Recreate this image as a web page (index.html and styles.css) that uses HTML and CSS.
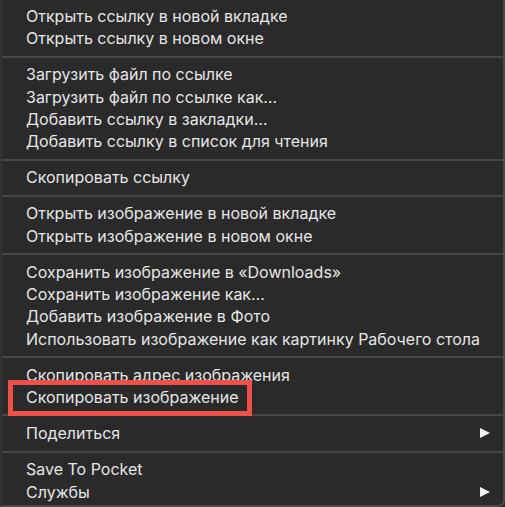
FILE: index.html
```html
<!DOCTYPE html>
<html lang="ru">
<head>
    <meta charset="UTF-8">
    <meta name="viewport" content="width=device-width, initial-scale=1.0">
    <title>Контекстное меню</title>
    <link rel="stylesheet" href="styles.css">
</head>
<body>
    <div class="menu">
        <ul class="group">
            <li class="item">Открыть ссылку в новой вкладке</li>
            <li class="item">Открыть ссылку в новом окне</li>
        </ul>
        <div class="sep"></div>
        <ul class="group">
            <li class="item">Загрузить файл по ссылке</li>
            <li class="item">Загрузить файл по ссылке как…</li>
            <li class="item">Добавить ссылку в закладки…</li>
            <li class="item">Добавить ссылку в список для чтения</li>
        </ul>
        <div class="sep"></div>
        <ul class="group">
            <li class="item">Скопировать ссылку</li>
        </ul>
        <div class="sep"></div>
        <ul class="group">
            <li class="item">Открыть изображение в новой вкладке</li>
            <li class="item">Открыть изображение в новом окне</li>
        </ul>
        <div class="sep"></div>
        <ul class="group">
            <li class="item">Сохранить изображение в «Downloads»</li>
            <li class="item">Сохранить изображение как…</li>
            <li class="item">Добавить изображение в Фото</li>
            <li class="item">Использовать изображение как картинку Рабочего стола</li>
        </ul>
        <div class="sep"></div>
        <ul class="group">
            <li class="item">Скопировать адрес изображения</li>
            <li class="item marked">Скопировать изображение</li>
        </ul>
        <div class="sep"></div>
        <ul class="group">
            <li class="item submenu">Поделиться</li>
        </ul>
        <div class="sep"></div>
        <ul class="group">
            <li class="item">Save To Pocket</li>
            <li class="item submenu">Службы</li>
        </ul>
    </div>
</body>
</html>
```

FILE: styles.css
```css
html, body {
    margin: 0;
    padding: 0;
    background-color: #2b2b2b;
}

.menu {
    width: 505px;
    height: 507px;
    box-sizing: border-box;
    padding-top: 5px;
    background-color: #2a2a2a;
    border-left: 2px solid #323232;
    border-right: 2px solid #4a4a4a;
    border-bottom: 2px solid #4a4a4a;
    border-bottom-right-radius: 7px;
    font-family: Inter, "Noto Sans", sans-serif;
    font-size: 16px;
    color: #e6e6e6;
    overflow: hidden;
}

.group {
    list-style: none;
    margin: 0;
    padding: 0;
}

.item {
    position: relative;
    height: 22.3px;
    line-height: 22.3px;
    padding-left: 24px;
    white-space: nowrap;
}

.sep {
    height: 2px;
    margin: 6px 0 5.8px;
    background-color: #474747;
}

.submenu::after {
    content: "";
    position: absolute;
    right: 13px;
    top: 6px;
    border-style: solid;
    border-width: 5.5px 0 5.5px 10px;
    border-color: transparent transparent transparent #f2f2f2;
}

.marked::before {
    content: "";
    position: absolute;
    left: 6px;
    top: -6px;
    width: 234px;
    height: 26px;
    border: 5px solid #ef5149;
}
```
